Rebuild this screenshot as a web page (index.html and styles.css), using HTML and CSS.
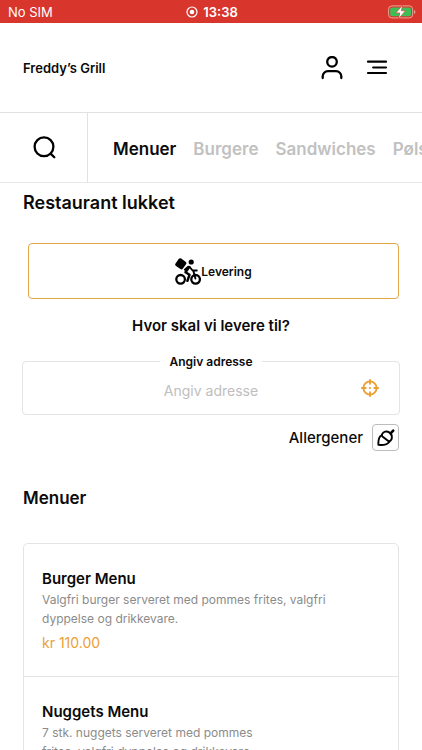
FILE: index.html
```html
<!DOCTYPE html>
<html lang="da">
<head>
<meta charset="utf-8">
<meta name="viewport" content="width=device-width, initial-scale=1">
<title>Freddy’s Grill</title>
<link rel="stylesheet" href="styles.css">
</head>
<body>
<div class="status">
  <span>No SIM</span>
  <span class="clock">
    <svg width="12" height="12" viewBox="0 0 12 12" aria-hidden="true"><circle cx="6" cy="6" r="5" fill="none" stroke="#fff" stroke-width="1.2"/><circle cx="6" cy="6" r="2.3" fill="#fff"/></svg>
    <span>13:38</span>
  </span>
  <svg class="battery" width="28" height="14" viewBox="0 0 28 14" aria-hidden="true">
    <rect x=".6" y=".9" width="24" height="12" rx="3.2" fill="none" stroke="#f0a298" stroke-width="1"/>
    <rect x="2.2" y="2.5" width="20.8" height="8.8" rx="1.8" fill="#3fbe58"/>
    <path d="M26 5v4q1.4-.6 1.4-2T26 5z" fill="#f0a298"/>
    <path d="M14.6.3 7.8 7.9h4.1L10.5 13.7l7-7.9h-4.2z" fill="#fff" stroke="#d8352c" stroke-width=".6"/>
  </svg>
</div>

<header class="header">
  <a class="brand" href="#">Freddy’s Grill</a>
  <div class="actions">
    <button class="icon-button" type="button" aria-label="Profil">
      <svg width="24" height="24" viewBox="0 0 24 24" fill="none" stroke="#000" stroke-width="2.3" stroke-linecap="round"><circle cx="12" cy="5.8" r="4.8"/><path d="M2.7 22v-1.6a5.2 5.2 0 0 1 5.2-5.2h8.2a5.2 5.2 0 0 1 5.2 5.2V22"/></svg>
    </button>
    <button class="icon-button" type="button" aria-label="Åbn menu">
      <svg width="24" height="24" viewBox="0 0 24 24" fill="none" stroke="#000" stroke-width="2.2" stroke-linecap="round"><path d="M3 5.7h18M8.2 11.5H21M3 17h18"/></svg>
    </button>
  </div>
</header>

<div class="toolbar">
  <button class="search" type="button" aria-label="Søg">
    <svg width="24" height="24" viewBox="0 0 24 24" fill="none" stroke="#000" stroke-width="2.3" stroke-linecap="round"><circle cx="12" cy="10.8" r="9.4"/><path d="m18.6 17.6 3.7 3.7"/></svg>
  </button>
  <nav class="tabs">
    <a class="tab tab-active" href="#menuer">Menuer</a>
    <a class="tab" href="#burgere">Burgere</a>
    <a class="tab" href="#sandwiches">Sandwiches</a>
    <a class="tab" href="#poelser">Pølser</a>
  </nav>
</div>

<main class="content">
  <h1 class="title">Restaurant lukket</h1>
  <form class="order">
    <button class="delivery" type="button">
      <svg width="26" height="28" viewBox="0 0 26 28" fill="none" stroke="#000" stroke-width="2.3" stroke-linecap="round" stroke-linejoin="round" aria-hidden="true">
        <rect x="1.3" y="2.3" width="9" height="9" rx="1.8" transform="rotate(35 5.8 6.8)" fill="#000" stroke="none"/>
        <circle cx="16.2" cy="5" r="2.6" fill="#000" stroke="none"/>
        <circle cx="5.6" cy="22.3" r="4.3"/><circle cx="20.6" cy="22.3" r="4.3"/>
        <path d="m14.2 10-3.7 5.2 4 2.6-2.1 6" stroke-width="2.5"/>
        <path d="m13.2 9.7-3.4 3M14.6 10l3 3.5h4.2M18.4 14l2 7.6" stroke-width="1.9"/>
      </svg>
      <span>Levering</span>
    </button>
    <h2 class="question">Hvor skal vi levere til?</h2>
    <fieldset class="address">
      <legend class="address-legend"><label for="address">Angiv adresse</label></legend>
      <div class="address-row">
        <input class="address-input" id="address" type="text" placeholder="Angiv adresse">
        <button class="icon-button" type="button" aria-label="Brug min placering">
          <svg width="18" height="18" viewBox="0 0 18 18" fill="none" stroke="#eba036" stroke-width="1.9"><circle cx="9" cy="9" r="6.6"/><path d="M9 .2v5.2M9 12.6v5.2M.2 9h5.2M12.6 9h5.2"/><circle cx="9" cy="9" r="1.1" fill="#eba036" stroke="none"/></svg>
        </button>
      </div>
    </fieldset>
  </form>

  <div class="allergens">
    <label for="allergens">Allergener</label>
    <button class="allergen-button" id="allergens" type="button" aria-label="Allergener">
      <svg width="18" height="18" viewBox="0 0 18 18" fill="none" stroke="#000" stroke-width="1.9" stroke-linecap="round" stroke-linejoin="round"><path d="M4.6 6.2C2.2 7.6 1.1 10.6 1.4 15.8c5 .5 9.2-.5 11.1-3.1"/><path d="M5 5.4C6.2 2.6 9.5 1.6 12.2 3.4c3 2.1 3.5 5.6 1.6 7.9-.9 1.1-2.2 1.1-3.2.2L5.4 7.4q-.9-.8-.4-2z"/><path d="m13.6 4.3 2.6-2.7" stroke-width="2.6"/></svg>
    </button>
  </div>

  <section id="menuer">
    <h2 class="section-title">Menuer</h2>
    <div class="menu">
      <article class="item">
        <h3 class="item-name">Burger Menu</h3>
        <p class="item-text">Valgfri burger serveret med pommes frites, valgfri dyppelse og drikkevare.</p>
        <p class="item-price">kr 110.00</p>
      </article>
      <article class="item">
        <h3 class="item-name">Nuggets Menu</h3>
        <p class="item-text">7 stk. nuggets serveret med pommes<br>frites, valgfri dyppelse og drikkevare.</p>
        <p class="item-price">kr 110.00</p>
      </article>
    </div>
  </section>
</main>
</body>
</html>
```
FILE: styles.css
```css
* { box-sizing: border-box; }

html { scrollbar-width: none; }

body {
  margin: 0;
  overflow-x: hidden;
  background: #fff;
  color: #0b0b0b;
  font-family: Inter, "Liberation Sans", sans-serif;
}

h1, h2, h3, p { margin: 0; }
a { color: inherit; text-decoration: none; }
svg { display: block; flex: none; }

button, input { font: inherit; color: inherit; }

button {
  margin: 0;
  padding: 0;
  border: 0;
  background: none;
  cursor: pointer;
}

.status {
  display: grid;
  grid-template-columns: 1fr auto 1fr;
  align-items: center;
  height: 23px;
  padding: 0 6px 0 8px;
  background: #d8352c;
  color: #fff;
  font-size: 13px;
}

.clock {
  display: flex;
  align-items: center;
  gap: 5px;
  font-weight: 600;
}

.battery { justify-self: end; }

.header {
  display: flex;
  align-items: center;
  justify-content: space-between;
  height: 90px;
  padding: 0 33px 0 23px;
  border-bottom: 1px solid #e2e2e2;
}

.brand { font-size: 13px; font-weight: 600; }
.actions { display: flex; gap: 21px; }
.icon-button { flex: none; }

.toolbar {
  display: flex;
  height: 70px;
  border-bottom: 1px solid #e8e8e8;
}

.search {
  display: grid;
  flex: none;
  width: 88px;
  place-items: center;
  border-right: 1px solid #e2e2e2;
}

.tabs {
  display: flex;
  flex: 1;
  align-items: center;
  gap: 17px;
  padding: 2px 0 0 25px;
  overflow: hidden;
  font-size: 17px;
  font-weight: 600;
}

.tab { color: #c1c1c1; }
.tab-active { color: #0b0b0b; }

.content { padding: 8px 23px 0; }

.title, .section-title {
  font-weight: 600;
  line-height: 24px;
}

.title { font-size: 18px; }

.section-title {
  margin-top: 35px;
  font-size: 17px;
}

.order { margin-top: 28px; }

.delivery {
  display: flex;
  align-items: center;
  justify-content: center;
  width: calc(100% - 5px);
  height: 56px;
  margin-left: 5px;
  border: 1px solid #e3a647;
  border-radius: 4px;
  font-size: 12px;
  font-weight: 600;
}

.question {
  margin-top: 17px;
  font-size: 15px;
  font-weight: 600;
  line-height: 20px;
  text-align: center;
}

.address {
  min-width: 0;
  margin: 17px -1px 0;
  padding: 0 20px 9px;
  border: 1px solid #e4e4e4;
  border-radius: 4px;
}

.address-legend {
  margin: 0 auto;
  padding: 0 9px;
  font-size: 12px;
  font-weight: 600;
  line-height: 17px;
}

.address-row { display: flex; align-items: center; }

.address-input {
  flex: 1;
  min-width: 0;
  height: 35px;
  padding: 6px 0 0 18px;
  border: 0;
  outline: 0;
  background: none;
  font-size: 14px;
  text-align: center;
}

.address-input::placeholder { color: #bebebe; opacity: 1; }

.allergens {
  display: flex;
  align-items: center;
  justify-content: flex-end;
  gap: 9px;
  margin-top: 9px;
  font-size: 15px;
  font-weight: 500;
}

.allergen-button {
  display: grid;
  width: 27px;
  height: 27px;
  place-items: center;
  border: 1px solid #bcbcbc;
  border-radius: 4px;
}

.menu {
  margin-top: 33px;
  border: 1px solid #e4e4e4;
  border-radius: 5px;
}

.item { padding: 24px 18px 22px; }
.item + .item { border-top: 1px solid #e4e4e4; }

.item-name {
  font-size: 15px;
  font-weight: 600;
  line-height: 22px;
}

.item-text {
  max-width: 300px;
  color: #8b8b8b;
  font-size: 12px;
  line-height: 19px;
}

.item-price {
  margin-top: 4px;
  color: #eba036;
  font-size: 14px;
  line-height: 22px;
}
```
